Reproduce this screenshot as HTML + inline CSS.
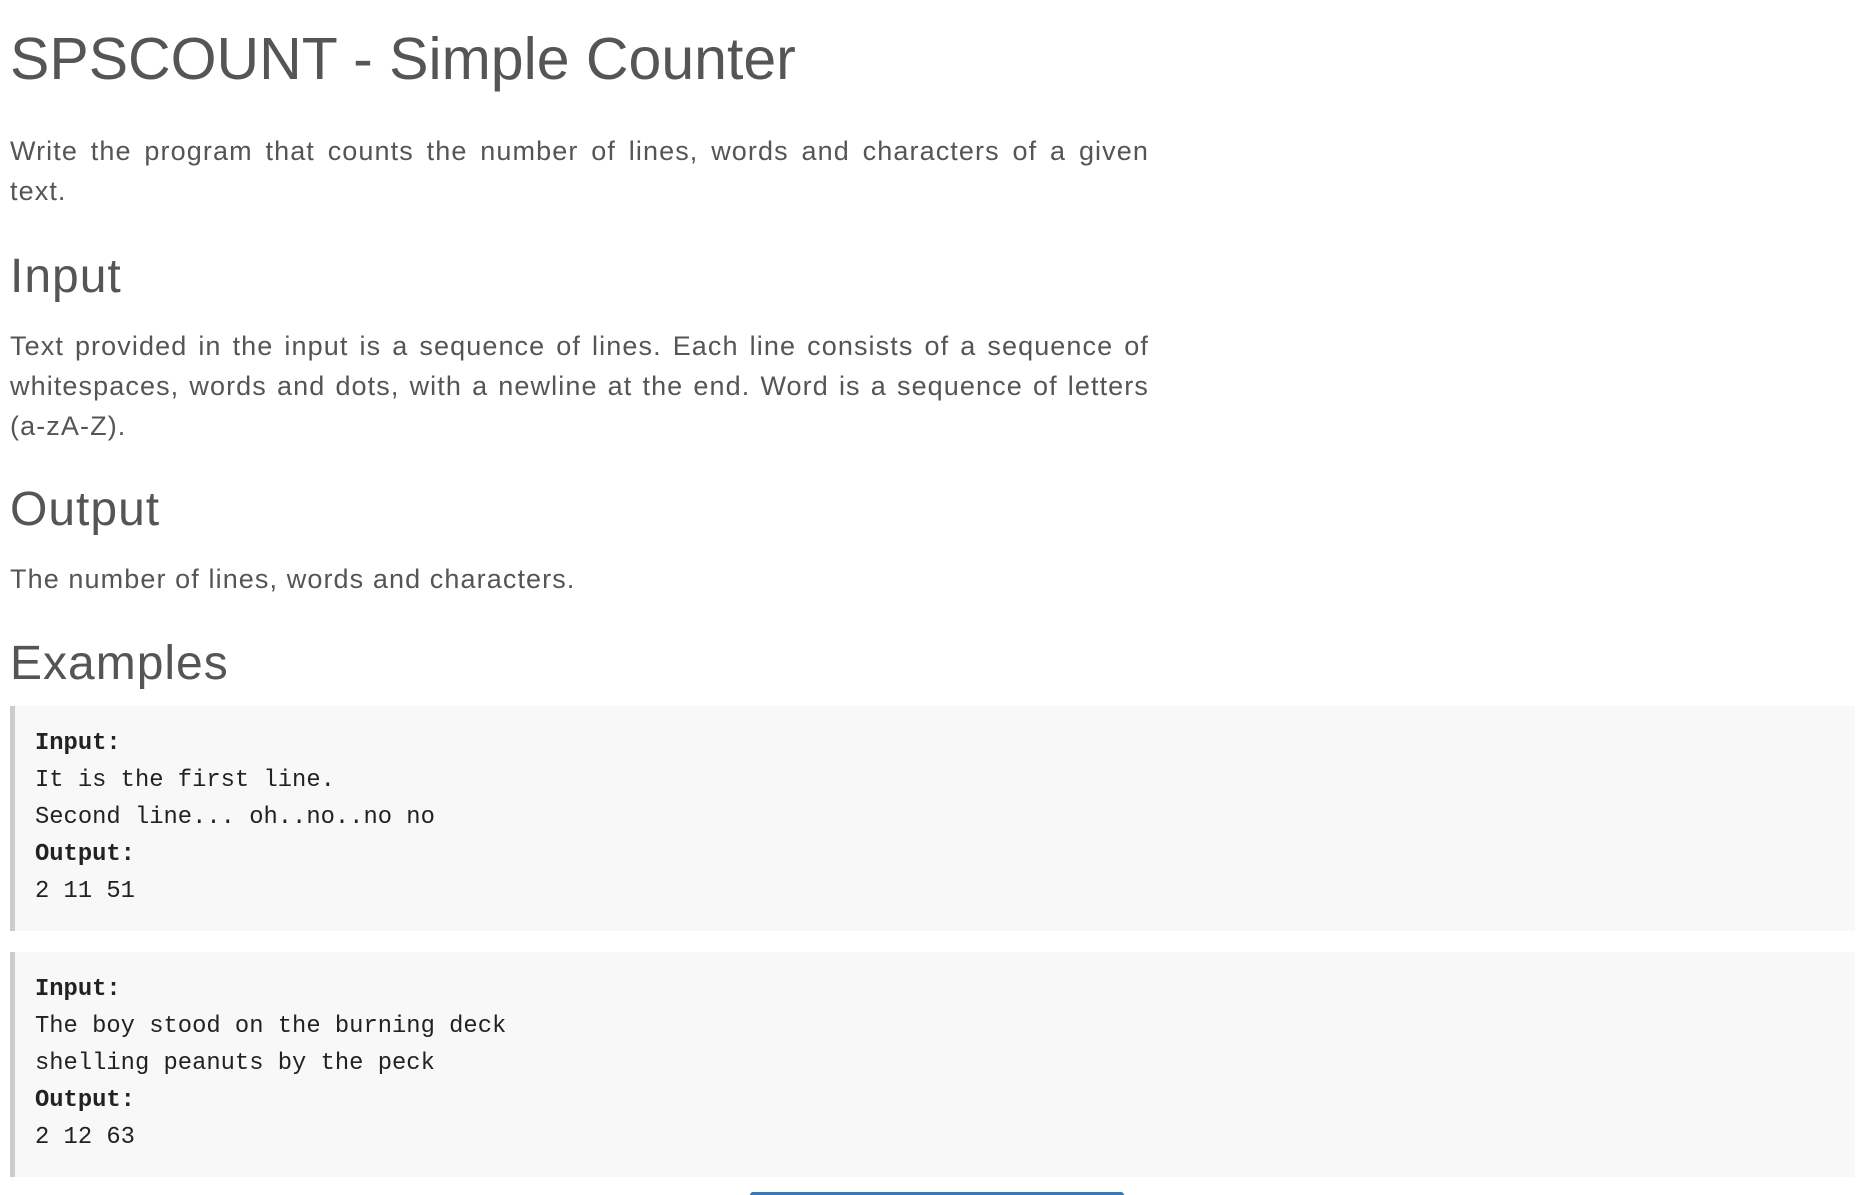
<!DOCTYPE html>
<html><head><meta charset="utf-8"><style>
html,body{margin:0;padding:0;background:#fff;width:1872px;height:1195px;overflow:hidden;position:relative}
div{position:absolute;left:10px;color:#555;font-family:"Liberation Sans",sans-serif}
.t{top:19px;font-size:59px;line-height:80px;white-space:nowrap}
.h{font-size:48px;line-height:56px;white-space:nowrap;letter-spacing:1px}
.p{font-size:27px;line-height:40px;width:1139px;text-align:justify;letter-spacing:1.1px}
.c{left:10px;width:1820px;background:#f8f8f8;border-left:5px solid #ccc;padding:19px 0 21px 20px;font-family:"Liberation Mono",monospace;font-size:23.8px;line-height:37px;color:#222;white-space:pre}
.c b{font-weight:bold}
</style></head><body>
<div class="t">SPSCOUNT - Simple Counter</div>
<div class="p" style="top:131px">Write the program that counts the number of lines, words and characters of a given text.</div>
<div class="h" style="top:249px">Input</div>
<div class="p" style="top:326px">Text provided in the input is a sequence of lines. Each line consists of a sequence of whitespaces, words and dots, with a newline at the end. Word is a sequence of letters (a-zA-Z).</div>
<div class="h" style="top:482px">Output</div>
<div class="p" style="top:559px">The number of lines, words and characters.</div>
<div class="h" style="top:636px">Examples</div>
<div class="c" style="top:706px"><b>Input:</b>
It is the first line.
Second line... oh..no..no no
<b>Output:</b>
2 11 51</div>
<div class="c" style="top:952px"><b>Input:</b>
The boy stood on the burning deck
shelling peanuts by the peck
<b>Output:</b>
2 12 63</div>
<div style="left:750px;top:1192px;width:374px;height:3px;background:#337ab7;border-radius:3px 3px 0 0"></div>
</body></html>
